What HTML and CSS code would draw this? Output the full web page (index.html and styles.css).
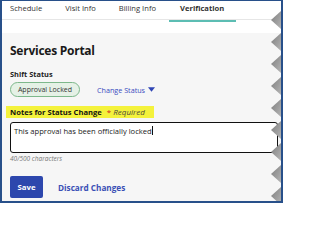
FILE: index.html
```html
<!DOCTYPE html>
<html>
<head>
<meta charset="utf-8">
<link rel="stylesheet" href="styles.css">
</head>
<body>
<div class="frame">
  <nav class="tabs">
    <span class="tab">Schedule</span>
    <span class="tab">Visit Info</span>
    <span class="tab">Billing Info</span>
    <span class="tab active">Verification</span>
  </nav>
  <div class="subbar"></div>
  <main class="content">
    <h1 class="title">Services Portal</h1>
    <div class="label">Shift Status</div>
    <div class="status-row">
      <span class="pill">Approval Locked</span>
      <span class="link">Change Status <svg class="caret" viewBox="0 0 8 5" width="7" height="5"><path d="M0 0H8L4 5Z" fill="#2f45b5"/></svg></span>
    </div>
    <div class="notes-label"><b>Notes for Status Change</b><span class="req"><span class="star">*</span> Required</span></div>
    <div class="field">This approval has been officially locked<span class="cursor"></span></div>
    <div class="counter">40/500 characters</div>
    <div class="actions">
      <span class="btn">Save</span>
      <span class="discard">Discard Changes</span>
    </div>
  </main>
  <svg class="torn" viewBox="0 0 12 203" width="12" height="203" preserveAspectRatio="none">
    <defs>
      <linearGradient id="g" x1="0" y1="0" x2="1" y2="1">
        <stop offset="0" stop-color="#7d7d7d"/>
        <stop offset="1" stop-color="#b5b5b5"/>
      </linearGradient>
    </defs>
    <g fill="url(#g)">
      <polygon points="12,11 2,20 12,29"/>
      <polygon points="12,33 2,42 12,51"/>
      <polygon points="12,55 2,64 12,73"/>
      <polygon points="12,77 2,86 12,95"/>
      <polygon points="12,99 2,108 12,117"/>
      <polygon points="12,121 2,130 12,139"/>
      <polygon points="12,143 2,152 12,161"/>
      <polygon points="12,165 2,174 12,183"/>
      <polygon points="12,187 2,196 12,205"/>
    </g>
  </svg>
</div>
</body>
</html>
```
FILE: styles.css
```css
html, body {
  margin: 0;
  padding: 0;
  background: #fff;
}
body {
  width: 283px;
  height: 203px;
  overflow: hidden;
  font-family: "Open Sans", "Noto Sans", sans-serif;
}
.frame {
  position: relative;
  box-sizing: border-box;
  width: 283px;
  height: 203px;
  border: 2px solid #28508a;
  border-top-width: 1px;
  background: #f6f6f6;
  overflow: hidden;
}
.tabs {
  display: flex;
  gap: 23px;
  height: 18px;
  padding-left: 8px;
  background: #fff;
  border-bottom: 1px solid #e6e6e6;
  font-size: 7.6px;
  line-height: 15px;
  color: #333;
}
.tab {
  position: relative;
}
.tab.active {
  font-weight: 700;
  margin-left: 1px;
}
.tab.active::after {
  content: "";
  position: absolute;
  left: -11px;
  right: -12px;
  bottom: -3px;
  height: 2px;
  background: #5cbdb3;
}
.subbar {
  height: 13px;
  background: #fff;
}
.content {
  padding-left: 8px;
}
.title {
  margin: 10px 0 0;
  font-size: 12px;
  line-height: 16px;
  font-weight: 700;
  letter-spacing: -0.25px;
  color: #1a1a1a;
}
.label {
  margin-top: 11px;
  font-size: 7.4px;
  line-height: 9px;
  font-weight: 700;
  color: #222;
}
.status-row {
  display: flex;
  align-items: center;
  gap: 17px;
  margin-top: 3px;
}
.pill {
  box-sizing: border-box;
  width: 70px;
  height: 15px;
  border: 1px solid #7db88b;
  border-radius: 8px;
  background: #e5f1e6;
  font-size: 7px;
  line-height: 13px;
  text-align: center;
  color: #333;
}
.link {
  display: flex;
  align-items: center;
  gap: 3px;
  font-size: 7.2px;
  color: #3a4cbf;
}
.caret {
  display: block;
}
.notes-label {
  width: fit-content;
  margin: 9px 0 0 -4px;
  padding: 0 9px 0 4px;
  height: 12px;
  background: #f4f23c;
  font-size: 7.6px;
  line-height: 12px;
  color: #111;
}
.req {
  margin-left: 5px;
  font-size: 8px;
  font-style: italic;
  color: #4a4a3a;
}
.star {
  color: #d02020;
  font-style: normal;
}
.field {
  box-sizing: border-box;
  width: 268px;
  height: 31px;
  margin-top: 4px;
  padding: 3px 3px;
  border: 1.5px solid #111;
  border-radius: 3px;
  background: #fff;
  font-size: 7.6px;
  line-height: 10px;
  color: #222;
}
.cursor {
  display: inline-block;
  width: 0;
  height: 9px;
  border-left: 1px solid #111;
  vertical-align: -1px;
}
.counter {
  margin-top: 2px;
  font-size: 6.5px;
  line-height: 7px;
  font-style: italic;
  color: #777;
}
.actions {
  display: flex;
  align-items: center;
  gap: 15px;
  margin-top: 14px;
}
.btn {
  box-sizing: border-box;
  width: 33px;
  height: 22px;
  border-radius: 2px;
  background: #2d47ad;
  color: #fff;
  font-size: 7.8px;
  font-weight: 700;
  line-height: 22px;
  text-align: center;
}
.discard {
  font-size: 8.2px;
  font-weight: 700;
  color: #3a4fb5;
}
.torn {
  position: absolute;
  top: -1px;
  right: 0;
}
```
